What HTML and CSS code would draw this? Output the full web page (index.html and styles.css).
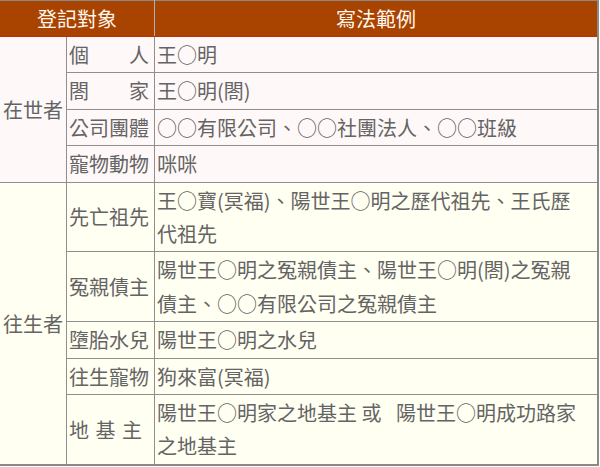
FILE: index.html
```html
<!DOCTYPE html>
<html lang="zh-Hant">
<head>
<meta charset="utf-8">
<title>登記對象</title>
<link rel="stylesheet" href="styles.css">
</head>
<body>
<table class="reg">
  <colgroup>
    <col class="c1">
    <col class="c2">
    <col class="c3">
  </colgroup>
  <thead>
    <tr>
      <th colspan="2">登記對象</th>
      <th>寫法範例</th>
    </tr>
  </thead>
  <tbody class="alive">
    <tr>
      <td rowspan="4" class="group">在世者</td>
      <td class="kind">個　　人</td>
      <td class="ex">王○明</td>
    </tr>
    <tr>
      <td class="kind">閤　　家</td>
      <td class="ex">王○明(閤)</td>
    </tr>
    <tr>
      <td class="kind">公司團體</td>
      <td class="ex">○○有限公司、○○社團法人、○○班級</td>
    </tr>
    <tr>
      <td class="kind">寵物動物</td>
      <td class="ex">咪咪</td>
    </tr>
  </tbody>
  <tbody class="dead">
    <tr>
      <td rowspan="5" class="group">往生者</td>
      <td class="kind">先亡祖先</td>
      <td class="ex">王○寶(冥福)、陽世王○明之歷代祖先、王氏歷代祖先</td>
    </tr>
    <tr>
      <td class="kind">冤親債主</td>
      <td class="ex">陽世王○明之冤親債主、陽世王○明(閤)之冤親債主、○○有限公司之冤親債主</td>
    </tr>
    <tr>
      <td class="kind">墮胎水兒</td>
      <td class="ex">陽世王○明之水兒</td>
    </tr>
    <tr>
      <td class="kind">往生寵物</td>
      <td class="ex">狗來富(冥福)</td>
    </tr>
    <tr>
      <td class="kind spaced">地 基 主</td>
      <td class="ex">陽世王○明家之地基主 或 <span class="gap"></span>陽世王○明成功路家之地基主</td>
    </tr>
  </tbody>
</table>
</body>
</html>
```

FILE: styles.css
```css
html, body {
  margin: 0;
  padding: 0;
  background: #ffffff;
}

body {
  font-family: "Noto Sans CJK TC", "Noto Sans CJK SC", sans-serif;
  font-size: 20px;
  color: #646464;
}

.reg {
  border-collapse: collapse;
  table-layout: fixed;
  width: 600px;
  margin-left: -1px;
  border-top: 1px solid #8a8a8a;
  border-right: 2px solid #8a8a8a;
  border-bottom: 2px solid #8a8a8a;
}

.c1 { width: 67px; }
.c2 { width: 88px; }

.reg th {
  background: #a84300;
  color: #fff6ee;
  font-weight: normal;
  line-height: 34px;
  padding: 1px 2px 0;
  text-align: center;
  border-left: 1px solid #b0b0b0;
  border-bottom: 1px solid #c62a00;
}

.reg td {
  line-height: 33.4px;
  padding: 1px 2px;
  border: 1px solid #8f8f8f;
  vertical-align: middle;
  text-align: left;
}

.reg td.group {
  text-align: center;
  padding: 1px 0;
}

.reg td.kind {
  white-space: nowrap;
}

.reg td.ex {
  padding-right: 20px;
}

.reg td.spaced {
  word-spacing: 2px;
}

.gap {
  display: inline-block;
  width: 10px;
}

.alive td { background: #fff8f8; }
.dead td { background: #fffff2; }
```
